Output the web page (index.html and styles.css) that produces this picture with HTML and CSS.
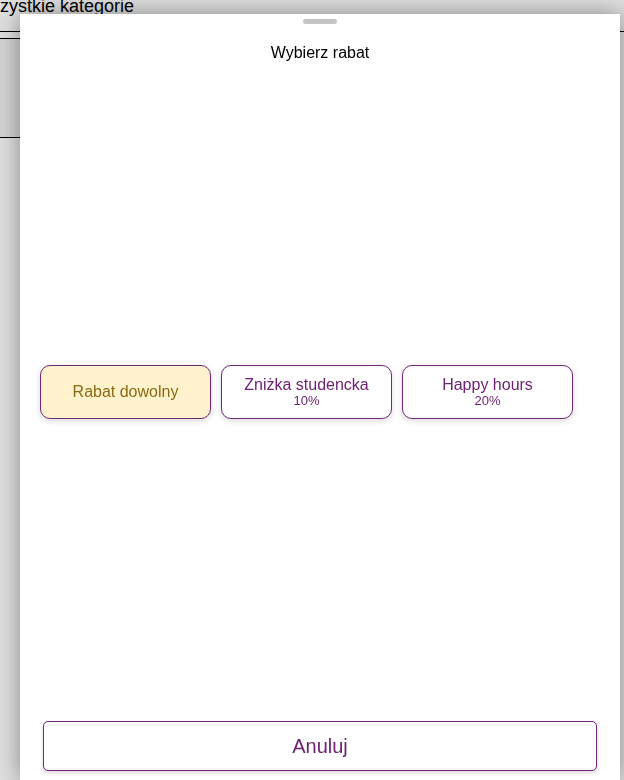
FILE: index.html
```html
<!DOCTYPE html>
<html lang="pl">

<head>
  <meta charset="UTF-8">
  <title>Kasa - rabaty</title>
  <meta name="viewport" content="width=device-width, initial-scale=1.0">
  <link rel="stylesheet" href="styles.css">
</head>

<body>

  <!-- page behind the sheet -->
  <div class="page">
    <div class="cat-bar">
      <span class="cat-title">Wszystkie kategorie</span>
    </div>
    <div class="cat-panel"></div>
  </div>

  <div class="backdrop"></div>

  <div class="sheet">
    <div class="handle"></div>
    <h2 class="sheet-title">Wybierz rabat</h2>

    <div class="discounts">
      <button class="discount custom">
        <span class="name">Rabat dowolny</span>
      </button>
      <button class="discount">
        <span class="name">Zniżka studencka</span>
        <span class="value">10%</span>
      </button>
      <button class="discount">
        <span class="name">Happy hours</span>
        <span class="value">20%</span>
      </button>
    </div>

    <button class="cancel">Anuluj</button>
  </div>

</body>

</html>
```

FILE: styles.css
```css
* {
  box-sizing: border-box;
  margin: 0;
  padding: 0;
}

body {
  font-family: Arial, 'Liberation Sans', sans-serif;
  background: #fff;
  height: 780px;
  overflow: hidden;
}

/* underlying page */
.page {
  height: 100%;
}

.cat-bar {
  height: 32px;
  border-bottom: 1px solid #000;
  overflow: hidden;
  white-space: nowrap;
}

.cat-title {
  display: block;
  font-size: 18px;
  line-height: 18px;
  margin-top: -3px;
  margin-left: -26px;
  color: #000;
}

.cat-panel {
  width: 300px;
  height: 100px;
  margin-top: 6px;
  border-top: 1px solid #000;
  border-bottom: 1px solid #000;
  background: #f2f2f2;
}

.backdrop {
  position: fixed;
  inset: 0;
  background: rgba(0, 0, 0, 0.13);
}

/* bottom sheet */
.sheet {
  position: fixed;
  top: 14px;
  left: 20px;
  right: 4px;
  bottom: 0;
  background: #fff;
  box-shadow: 0 0 22px rgba(0, 0, 0, 0.4);
  display: flex;
  flex-direction: column;
  padding: 5px 20px 9px;
}

.handle {
  width: 34px;
  height: 5px;
  border-radius: 3px;
  background: #c4c4c4;
  align-self: center;
}

.sheet-title {
  margin-top: 20px;
  font-size: 16px;
  line-height: 18px;
  font-weight: normal;
  text-align: center;
  color: #000;
}

.discounts {
  flex: 1;
  display: flex;
  align-items: center;
  gap: 10px;
}

.discount {
  width: 171px;
  height: 54px;
  border: 1px solid #74267a;
  border-radius: 10px;
  background: #fff;
  box-shadow: 0 2px 6px rgba(0, 0, 0, 0.15);
  color: #6e2272;
  font-family: inherit;
  display: flex;
  flex-direction: column;
  align-items: center;
  justify-content: center;
  cursor: pointer;
}

.discount .name {
  font-size: 16px;
  line-height: 18px;
}

.discount .value {
  font-size: 13px;
  line-height: 14px;
}

.discount.custom {
  background: #fff2cc;
  color: #8a6a12;
}

.cancel {
  margin: 0 3px;
  height: 50px;
  border: 1px solid #74267a;
  border-radius: 5px;
  background: #fff;
  box-shadow: 0 2px 4px rgba(0, 0, 0, 0.15);
  color: #6e2272;
  font-family: inherit;
  font-size: 20px;
  cursor: pointer;
}
```
